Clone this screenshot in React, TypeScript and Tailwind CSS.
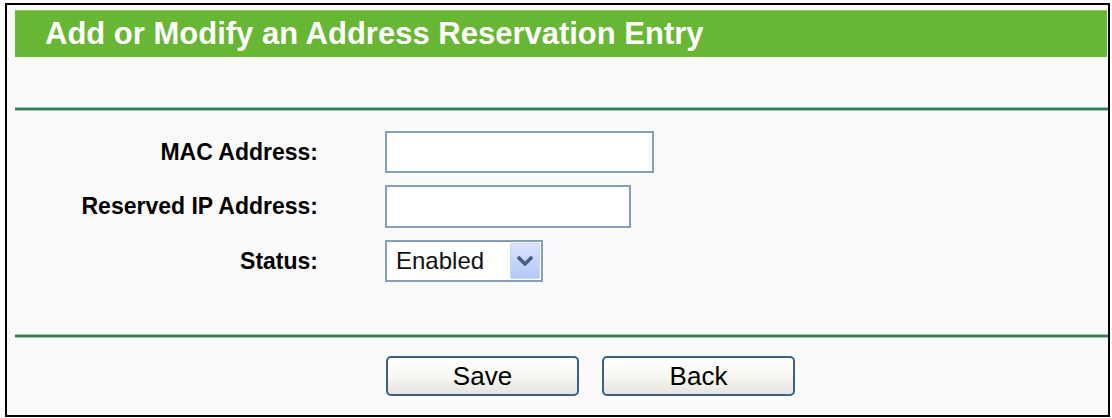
import { useState } from "react";

const labelCls = "text-right text-[23px] font-bold text-black leading-none";
const inputCls = "border-2 border-[#849fbd] bg-white px-2 text-[22px] outline-none";
const btnCls =
  "w-[193px] h-[40px] rounded-[5px] border-2 border-[#3a5f8a] bg-gradient-to-b from-white via-[#f7f7f3] to-[#e6e5de] text-[26px] leading-none text-black";

function Divider() {
  return <div className="ml-[8px] h-[4px] border-y border-[#9cc5ae] bg-[#3b7a59]" />;
}

export default function App() {
  const [mac, setMac] = useState("");
  const [ip, setIp] = useState("");

  return (
    <div className="w-[1112px] h-[418px] bg-white pt-[3px] pl-[5px] font-['Liberation_Sans',Arial,sans-serif]">
      <div className="w-[1105px] h-[414px] border-2 border-black bg-[#fafafa] pt-[5px]">
        {/* title bar */}
        <div className="ml-[8px] mr-[1px] h-[47px] border-t border-[#8fd060] bg-[#67b634] pl-[30px] text-[31px] font-bold leading-[45px] text-white">
          Add or Modify an Address Reservation Entry
        </div>

        <div className="h-[50px]" />
        <Divider />

        {/* form */}
        <div className="mt-[20px] grid grid-cols-[311px_1fr] items-center gap-x-[67px] gap-y-[12px]">
          <div className={labelCls}>MAC Address:</div>
          <input
            className={`${inputCls} w-[269px] h-[42px]`}
            value={mac}
            onChange={(e) => setMac(e.target.value)}
          />

          <div className={labelCls}>Reserved IP Address:</div>
          <input
            className={`${inputCls} w-[246px] h-[43px]`}
            value={ip}
            onChange={(e) => setIp(e.target.value)}
          />

          <div className={labelCls}>Status:</div>
          <div className="flex w-[158px] h-[42px] items-center justify-between border-2 border-[#849fbd] bg-white">
            <span className="pl-[9px] text-[24px] leading-none text-[#111]">Enabled</span>
            <span className="mr-[1px] flex h-[36px] w-[30px] items-center justify-center rounded-[2px] border border-[#c6d5fb] bg-gradient-to-b from-[#dae5fd] to-[#b4c8f6]">
              <svg width="16" height="11" viewBox="0 0 16 11">
                <path d="M2 2 L8 8 L14 2" fill="none" stroke="#485c84" strokeWidth="3.6" strokeLinecap="round" strokeLinejoin="round" />
              </svg>
            </span>
          </div>
        </div>

        <div className="h-[52px]" />
        <Divider />

        {/* buttons */}
        <div className="mt-[18px] flex gap-[23px] pl-[379px]">
          <button className={btnCls}>Save</button>
          <button className={btnCls}>Back</button>
        </div>
      </div>
    </div>
  );
}
